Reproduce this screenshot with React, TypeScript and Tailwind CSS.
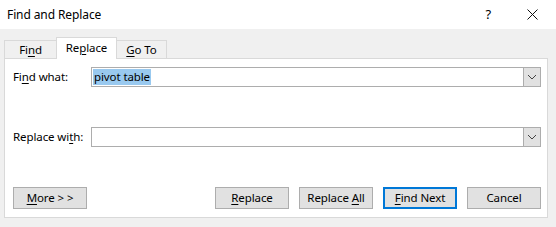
import React from "react";

const font = { fontFamily: '"Noto Sans", "Segoe UI", sans-serif' };

function U({ children }: { children: React.ReactNode }) {
  return <span className="underline underline-offset-2 decoration-1">{children}</span>;
}

function Chevron() {
  return (
    <svg width="10" height="6" viewBox="0 0 10 6" fill="none">
      <path d="M1 1 L5 5 L9 1" stroke="#444" strokeWidth="1" />
    </svg>
  );
}

function Combo({ children }: { children?: React.ReactNode }) {
  return (
    <div className="flex h-[20px] w-[450px] border border-[#adadad] bg-white">
      <div className="flex flex-1 items-center pl-[1px] text-black">{children}</div>
      <div className="flex w-[17px] items-center justify-center border-l border-[#adadad] bg-[#e1e1e1]">
        <Chevron />
      </div>
    </div>
  );
}

function Btn({ children, primary }: { children: React.ReactNode; primary?: boolean }) {
  return (
    <button
      className={
        primary
          ? "flex h-[22px] w-[74px] items-center justify-center border-2 border-[#0078d7] bg-[#e1e1e1] text-black"
          : "flex h-[22px] w-[74px] items-center justify-center border border-[#adadad] bg-[#e1e1e1] text-black"
      }
    >
      <span>{children}</span>
    </button>
  );
}

export default function App() {
  return (
    <div className="flex h-[227px] w-[556px] flex-col bg-[#f0f0f0] text-[11.5px] tracking-[-0.1px] text-black" style={font}>
      <div className="flex h-[29px] items-center bg-white pl-[7px]">
        <span className="text-[12px]">Find and Replace</span>
        <div className="flex-1" />
        <span className="mr-[36px] text-[13px]">?</span>
        <svg width="11" height="11" viewBox="0 0 11 11" className="mr-[18px]">
          <path d="M0.5 0.5 L10.5 10.5 M10.5 0.5 L0.5 10.5" stroke="#111" strokeWidth="1" />
        </svg>
      </div>
      <div className="flex h-[29px] items-end pl-[4px]">
        <div className="flex h-[18px] w-[53px] items-center justify-center border border-b-0 border-[#d9d9d9] bg-[#f0f0f0]">
          <span>
            Fi<U>n</U>d
          </span>
        </div>
        <div className="relative top-[1px] -mx-[1px] flex h-[22px] w-[61px] items-center justify-center border border-b-0 border-[#d9d9d9] bg-white pb-[2px]">
          <span>
            Re<U>p</U>lace
          </span>
        </div>
        <div className="flex h-[18px] w-[51px] items-center justify-center border border-b-0 border-[#d9d9d9] bg-[#f0f0f0]">
          <span>
            <U>G</U>o To
          </span>
        </div>
      </div>
      <div className="ml-[4px] flex h-[160px] w-[544px] flex-col border border-[#d9d9d9] bg-white pl-[8px] pr-[5px] pt-[8px]">
        <div className="flex items-center">
          <div className="w-[78px]">
            Fi<U>n</U>d what:
          </div>
          <Combo>
            <span className="bg-[#99c9ef] px-[1px] leading-[16px]">pivot table</span>
          </Combo>
        </div>
        <div className="mt-[40px] flex items-center">
          <div className="w-[78px]">
            Replace wi<U>t</U>h:
          </div>
          <Combo />
        </div>
        <div className="mt-[40px] flex items-center">
          <Btn>
            <U>M</U>ore &gt; &gt;
          </Btn>
          <div className="flex-1" />
          <div className="flex gap-[10px] pr-[1px]">
            <Btn>
              <U>R</U>eplace
            </Btn>
            <Btn>
              Replace <U>A</U>ll
            </Btn>
            <Btn primary>
              <U>F</U>ind Next
            </Btn>
            <Btn>Cancel</Btn>
          </div>
        </div>
      </div>
    </div>
  );
}
